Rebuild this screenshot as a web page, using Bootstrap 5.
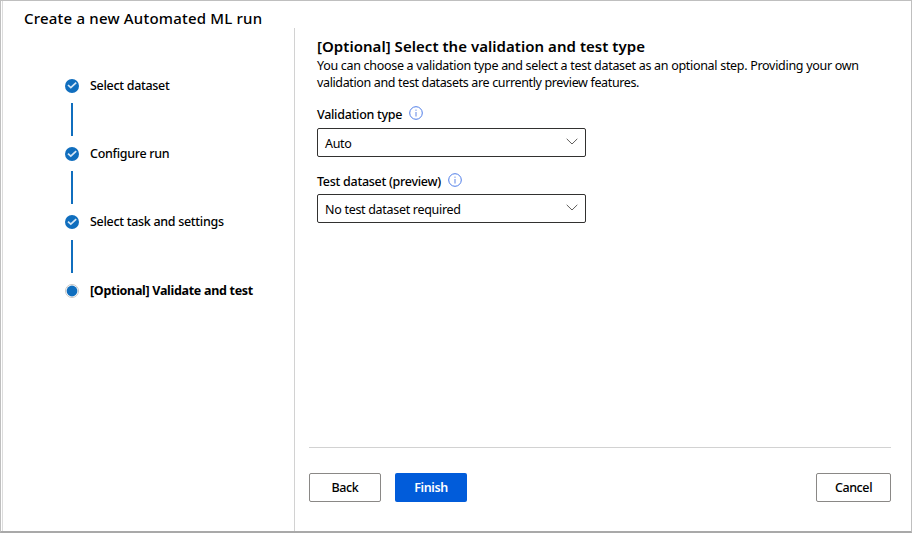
<!DOCTYPE html>
<html lang="en">
<head>
<meta charset="utf-8">
<title>Create a new Automated ML run</title>
<link href="https://cdn.jsdelivr.net/npm/bootstrap@5.3.0/dist/css/bootstrap.min.css" rel="stylesheet">
<style>
body{font-family:"Noto Sans","Open Sans",sans-serif;font-size:12.5px;line-height:17px;color:#000;background:#fff}
.wizard{height:533px;border:1px solid #bfbfbf;border-bottom:2px solid #a9a9a9;overflow:hidden}
.edge{width:2px;border-right:1px solid #dcdcdc}
.wizard-title{height:27px;padding:7px 0 0 21px;font-size:15px;line-height:20px;font-weight:500;letter-spacing:.2px}
.side{width:292px;border-right:1px solid #d2d2d2;padding:46px 0 0 62px}
.step{height:24px;gap:11px;letter-spacing:-.3px;font-weight:500}
.step span{margin-bottom:2px}
.step.current{font-weight:700;letter-spacing:-.3px}
.step.current span{margin-bottom:0}
.step svg{width:14px;height:14px}
.link-line{width:2px;height:33px;background:#106ebe;margin:5.2px 0 6px 6px}
.main{padding:8px 20px 0 14px}
.main-body{padding-left:8px}
.main-title{font-size:15px;line-height:20px;font-weight:600;letter-spacing:.04px}
.intro{letter-spacing:-.3px;padding-top:1px}
.intro span{letter-spacing:-.36px}
.field-label{font-weight:500;letter-spacing:-.28px;gap:7px;height:20px;margin-top:13px}
.field-label + .picker{margin-top:4px}
.picker + .field-label{margin-top:14px}
.picker + .field-label + .picker{margin-top:3px}
.field-label svg{width:14px;height:14px;margin-bottom:3px}
.picker{width:269px;height:29px;border:1px solid #323130;border-radius:2px;padding:0 7px 0 7px;letter-spacing:-.3px}
.picker span{margin-top:1px}
.picker svg{width:12px;height:7px;margin-bottom:3px}
.actions{border-top:1px solid #d2d2d2;margin-bottom:29px;padding-top:25px;gap:14px}
.actions .btn{width:72px;height:29px;padding:0;font-size:12.5px;line-height:17px;border-radius:2px;font-weight:500;letter-spacing:-.4px}
.btn-plain{border:1px solid #8a8886;color:#000;background:#fff}
.actions .btn-finish,.actions .btn-finish:hover{background:#015cda;color:#fff;font-weight:600}
.actions .btn-wide{width:75px}
</style>
<script src="https://cdn.jsdelivr.net/npm/bootstrap@5.3.0/dist/js/bootstrap.bundle.min.js"></script>
</head>
<body>
<div class="wizard d-flex">
  <div class="edge flex-shrink-0"></div>
  <div class="d-flex flex-column flex-grow-1">
    <header class="wizard-title text-nowrap">Create a new Automated ML run</header>
    <div class="d-flex flex-grow-1">
      <aside class="side flex-shrink-0 text-nowrap">
        <div class="step d-flex align-items-center"><svg viewBox="0 0 14 14"><circle cx="7" cy="7" r="7" fill="#106ebe"/><path d="M3 6 5.8 8.6 11.2 3.6" fill="none" stroke="#d5e6f5" stroke-width="1.7"/></svg><span>Select dataset</span></div>
        <div class="link-line"></div>
        <div class="step d-flex align-items-center"><svg viewBox="0 0 14 14"><circle cx="7" cy="7" r="7" fill="#106ebe"/><path d="M3 6.6 5.8 9.2 11.2 4.2" fill="none" stroke="#d5e6f5" stroke-width="1.7"/></svg><span>Configure run</span></div>
        <div class="link-line"></div>
        <div class="step d-flex align-items-center"><svg viewBox="0 0 14 14"><circle cx="7" cy="7" r="7" fill="#106ebe"/><path d="M3 6.6 5.8 9.2 11.2 4.2" fill="none" stroke="#d5e6f5" stroke-width="1.7"/></svg><span>Select task and settings</span></div>
        <div class="link-line"></div>
        <div class="step current d-flex align-items-center"><svg viewBox="0 0 14 14"><circle cx="7" cy="7" r="6.5" fill="#fff" stroke="#c8c6c4"/><circle cx="7" cy="7" r="5.4" fill="#106ebe"/></svg><span>[Optional] Validate and test</span></div>
      </aside>
      <main class="main d-flex flex-column flex-grow-1">
        <div class="main-body flex-grow-1">
          <h1 class="main-title mb-0">[Optional] Select the validation and test type</h1>
          <p class="intro mb-0 text-nowrap">You can choose a validation type and select a test dataset as an optional step. Providing your own<br><span>validation and test datasets are currently preview features.</span></p>
          <div class="field-label d-flex align-items-center"><span>Validation type</span><svg viewBox="0 0 14 14"><circle cx="7" cy="7" r="6.3" fill="none" stroke="#4f7de8"/><path d="M7 6V10.5M7 3.6V4.8" stroke="#5f85e6"/></svg></div>
          <div class="picker d-flex align-items-center justify-content-between"><span>Auto</span><svg viewBox="0 0 12 7"><path d="M.7.8 6 6 11.3.8" fill="none" stroke="#605e5c"/></svg></div>
          <div class="field-label d-flex align-items-center"><span>Test dataset (preview)</span><svg viewBox="0 0 14 14"><circle cx="7" cy="7" r="6.3" fill="none" stroke="#4f7de8"/><path d="M7 6V10.5M7 3.6V4.8" stroke="#5f85e6"/></svg></div>
          <div class="picker d-flex align-items-center justify-content-between"><span>No test dataset required</span><svg viewBox="0 0 12 7"><path d="M.7.8 6 6 11.3.8" fill="none" stroke="#605e5c"/></svg></div>
        </div>
        <div class="actions d-flex">
          <button class="btn btn-plain" type="button">Back</button>
          <button class="btn btn-finish" type="button">Finish</button>
          <button class="btn btn-plain btn-wide ms-auto" type="button">Cancel</button>
        </div>
      </main>
    </div>
  </div>
</div>
</body>
</html>
